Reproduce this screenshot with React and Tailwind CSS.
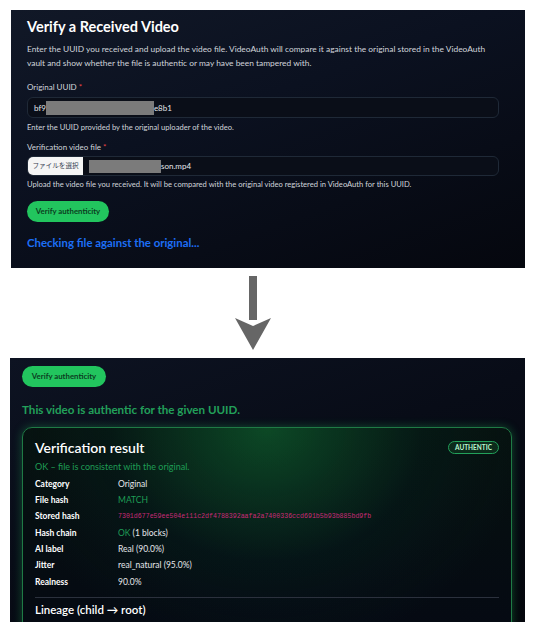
export default function App() {
    const rows = [
        { label: 'Category', value: <span>Original</span> },
        { label: 'File hash', value: <span className="text-[#1f9d55]">MATCH</span> },
        {
            label: 'Stored hash',
            value: (
                <span className="[font-family:'Liberation_Mono',monospace] text-[6.6px] text-[#c92a76]">
                    7301d677e59ee504e111c2df4788392aafa2a7400336ccd691b5b93b885bd9fb
                </span>
            ),
        },
        { label: 'Hash chain', value: <span><span className="text-[#1f9d55]">OK</span> (1 blocks)</span> },
        { label: 'AI label', value: <span>Real (90.0%)</span> },
        { label: 'Jitter', value: <span>real_natural (95.0%)</span> },
        { label: 'Realness', value: <span>90.0%</span> },
    ];

    return (
        <div className="w-[536px] h-[640px] bg-white flex flex-col [font-family:'Lato','Noto_Sans_CJK_JP',sans-serif] overflow-hidden">
            {/* before */}
            <div className="mt-[10px] ml-[11px] w-[514px] h-[258px] shrink-0 bg-[linear-gradient(160deg,#111827_0%,#0b1120_40%,#05070e_100%)] px-4 pt-[7px] overflow-hidden">
                <h1 className="text-[14.5px] leading-[20px] font-bold text-white">Verify a Received Video</h1>
                <p className="mt-[5px] text-[8.4px] leading-[14px] text-[#d1d5db]">
                    Enter the UUID you received and upload the video file. VideoAuth will compare it against the original stored in the VideoAuth<br />
                    vault and show whether the file is authentic or may have been tampered with.
                </p>

                <label className="block mt-[11px] text-[8px] leading-[12px] text-[#d1d5db]">
                    Original UUID <span className="text-[#ef4444]">*</span>
                </label>
                <div className="mt-[4px] w-[472px] h-[21px] rounded-md border border-[#1f2937] bg-[#0a0e18] flex items-center px-[6px] text-[8px] text-[#e5e7eb]">
                    <span>bf9</span>
                    <span className="w-[108px] h-[14px] bg-[#7b7b7b]"></span>
                    <span>e8b1</span>
                </div>
                <p className="mt-[3px] text-[7.6px] leading-[12px] text-[#d1d5db]">Enter the UUID provided by the original uploader of the video.</p>

                <label className="block mt-[8px] text-[8px] leading-[12px] text-[#d1d5db]">
                    Verification video file <span className="text-[#ef4444]">*</span>
                </label>
                <div className="mt-[3px] w-[472px] h-[20px] rounded-md border border-[#1f2937] bg-[#0a0e18] flex items-center text-[8px] text-[#e5e7eb] overflow-hidden">
                    <span className="h-full w-[55px] shrink-0 whitespace-nowrap bg-[#f5f5f5] text-[#374151] text-[6.6px] flex items-center justify-center">ファイルを選択</span>
                    <span className="ml-[6px] w-[72px] h-[13px] bg-[#7b7b7b]"></span>
                    <span>son.mp4</span>
                </div>
                <p className="mt-[2px] text-[7.6px] leading-[12px] text-[#d1d5db]">Upload the video file you received. It will be compared with the original video registered in VideoAuth for this UUID.</p>

                <button className="mt-[11px] w-[82px] h-[21px] rounded-full bg-[#22c55e] text-[7.8px] font-bold text-[#0b3d1f] flex items-center justify-center">
                    Verify authenticity
                </button>
                <p className="mt-[13px] text-[11.4px] leading-[16px] font-bold text-[#1d6ef5]">Checking file against the original...</p>
            </div>

            {/* arrow */}
            <div className="h-[90px] shrink-0 flex justify-start pl-[235px] pt-[8px]">
                <svg width="36" height="74" viewBox="0 0 36 74">
                    <rect x="14" y="0" width="8" height="44" fill="#666666" />
                    <path d="M0 42 L18 50 L36 42 L18 74 Z" fill="#666666" />
                </svg>
            </div>

            {/* after */}
            <div className="ml-[10px] w-[515px] h-[264px] shrink-0 bg-[linear-gradient(160deg,#0d1322_0%,#080c17_45%,#04060c_100%)] px-3 pt-[8px] overflow-hidden">
                <button className="w-[84px] h-[21px] rounded-full bg-[#22c55e] text-[7.8px] font-bold text-[#0b3d1f] flex items-center justify-center">
                    Verify authenticity
                </button>
                <p className="mt-[15px] text-[11.6px] leading-[16px] font-bold text-[#22a05a]">This video is authentic for the given UUID.</p>

                <div className="mt-[9px] w-[490px] rounded-[10px] border border-[#1f7a45] shadow-[0_0_10px_rgba(34,197,94,0.35)] bg-[radial-gradient(ellipse_at_50%_0%,rgba(22,163,74,0.38),rgba(6,78,59,0.12)_45%,transparent_75%),linear-gradient(180deg,#06110f,#050913)] px-3 pt-[10px] pb-6">
                    <div className="flex items-start justify-between">
                        <h2 className="text-[14px] leading-[20px] font-semibold text-white">Verification result</h2>
                        <span className="mt-[3px] h-[13px] px-[6px] rounded-full border border-[#22a05a] bg-[#0c2a1b] text-[6.5px] font-bold text-[#bbf7d0] flex items-center">AUTHENTIC</span>
                    </div>
                    <p className="mt-[2px] text-[9px] leading-[14px] text-[#1f9d55]">OK – file is consistent with the original.</p>

                    <div className="mt-[2px] flex flex-col">
                        {rows.map(row => (
                            <div key={row.label} className="h-[16.3px] flex items-center text-[8.5px] text-[#e5e7eb]">
                                <span className="w-[83px] font-bold text-white">{row.label}</span>
                                {row.value}
                            </div>
                        ))}
                    </div>

                    <div className="mt-[7px] border-t border-[#2b313d]"></div>
                    <h3 className="mt-[4px] text-[11.5px] leading-[16px] font-semibold text-white">Lineage (child → root)</h3>
                </div>
            </div>
        </div>
    );
}
